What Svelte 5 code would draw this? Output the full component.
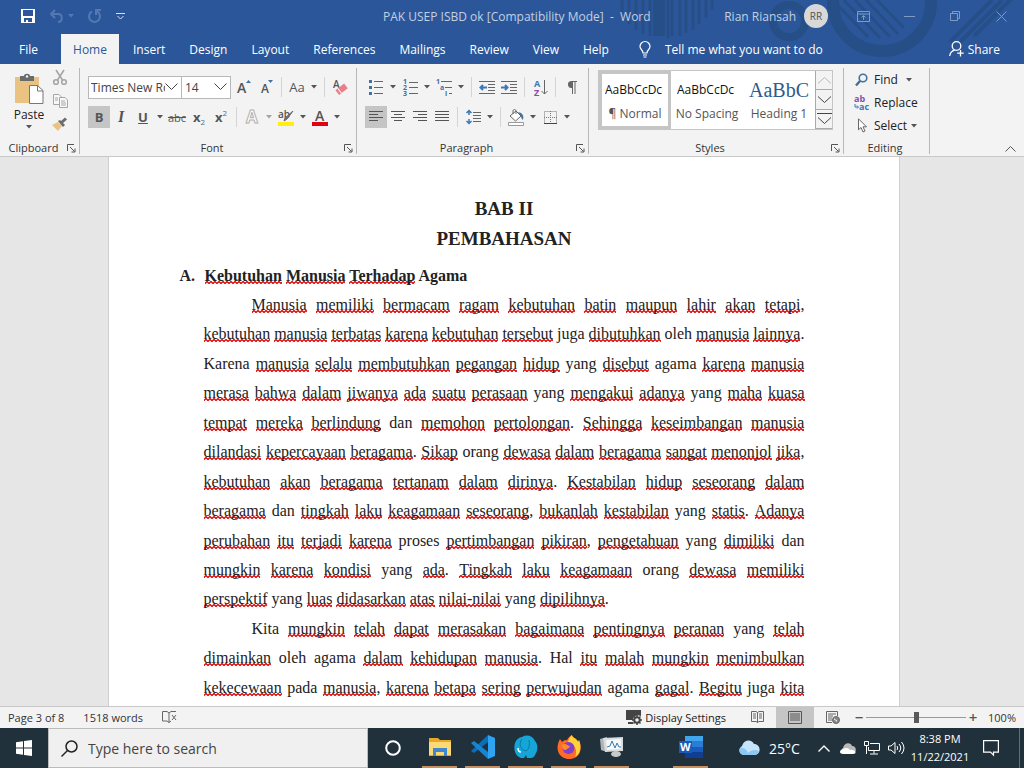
<script>
  const tabs = ['Insert', 'Design', 'Layout', 'References', 'Mailings', 'Review', 'View', 'Help'];

  // Words the Indonesian text shares with the proofing dictionary, so they are left unmarked.
  const known = new Set(['yang', 'agama', 'juga', 'oleh', 'dan', 'Karena', 'proses', 'pada', 'orang', 'Kita', 'Hal']);

  // Each paragraph is a list of set lines; `open` means that it runs on past the last line.
  const paragraphs = [
    {
      open: false,
      lines: [
        'Manusia memiliki bermacam ragam kebutuhan batin maupun lahir akan tetapi,',
        'kebutuhan manusia terbatas karena kebutuhan tersebut juga dibutuhkan oleh manusia lainnya.',
        'Karena manusia selalu membutuhkan pegangan hidup yang disebut agama karena manusia',
        'merasa bahwa dalam jiwanya ada suatu perasaan yang mengakui adanya yang maha kuasa',
        'tempat mereka berlindung dan memohon pertolongan. Sehingga keseimbangan manusia',
        'dilandasi kepercayaan beragama. Sikap orang dewasa dalam beragama sangat menonjol jika,',
        'kebutuhan akan beragama tertanam dalam dirinya. Kestabilan hidup seseorang dalam',
        'beragama dan tingkah laku keagamaan seseorang, bukanlah kestabilan yang statis. Adanya',
        'perubahan itu terjadi karena proses pertimbangan pikiran, pengetahuan yang dimiliki dan',
        'mungkin karena kondisi yang ada. Tingkah laku keagamaan orang dewasa memiliki',
        'perspektif yang luas didasarkan atas nilai-nilai yang dipilihnya.'
      ]
    },
    {
      open: true,
      lines: [
        'Kita mungkin telah dapat merasakan bagaimana pentingnya peranan yang telah',
        'dimainkan oleh agama dalam kehidupan manusia. Hal itu malah mungkin menimbulkan',
        'kekecewaan pada manusia, karena betapa sering perwujudan agama gagal. Begitu juga kita'
      ]
    }
  ].map((p) => ({
    open: p.open,
    lines: p.lines.map((line) =>
      line.split(' ').map((raw) => {
        const [, word, mark] = raw.match(/^(.*?)([.,]?)$/);
        return { word, mark, wrong: !known.has(word) };
      })
    )
  }));

  let fontName = $state('Times New Roman');
  let fontSize = $state('14');
  let zoom = $state(50);
  let query = $state('');
</script>

{#snippet arrow(label)}
  <button class="arrow" aria-label={label}><svg width="6" height="4" viewBox="0 0 6 4"><path d="M0 0h6L3 3.5z" fill="currentColor" /></svg></button>
{/snippet}

{#snippet launcher(label)}
  <button class="launcher" aria-label={label}>
    <svg width="9" height="9" viewBox="0 0 9 9" fill="none" stroke="#555"><path d="M.5 7V.5H7M3 3l4.500 4.500M8 4.500V8H4.500" /></svg>
  </button>
{/snippet}

{#snippet lines(rows)}
  <svg width="14" height="12" viewBox="0 0 14 12" stroke="#555"><path d={rows} /></svg>
{/snippet}

<div class="app">
  <header class="top">
    <svg class="deco" width="424" height="64" viewBox="0 0 424 64" fill="none" stroke="#264f88" aria-hidden="true">
      <path d="M22 0v14M29 0v24M36 0v30M43 0v34M50 0v36M68 0v38M72 0v36M80 0v36M86 0v33M93 0v30M99 0v24M106 0v18M112 0v10" stroke-width="3" />
      <path d="M59 0v36" stroke-width="12" />
      <circle cx="189" cy="21" r="16" stroke-width="8" />
      <circle cx="282" cy="2" r="49" stroke-width="12" />
      <path d="M233 0l35 37M244 0l36 38M255 0l35 37M266 0l32 34M277 0l27 28" stroke-width="3" />
      <path d="M350 42l42-42M360 42l42-42M374 36l38-38" stroke-width="4" />
    </svg>
    <div class="titlebar">
      <div class="quick">
        <button aria-label="Save"><svg width="14" height="14" viewBox="0 0 14 14"><path d="M0 0h14v14H0zM2 1v6h10V1zM3 9v4h2v-2h2v2h4V9z" fill="#fff" fill-rule="evenodd" /></svg></button>
        <button class="dim undo" aria-label="Undo">
          <svg width="15" height="14" viewBox="0 0 15 14" fill="none" stroke="currentColor" stroke-width="2"><path d="M6 1L2 5l4 4M2 5h7c5 0 5 8 0 8" /></svg>
          <svg width="6" height="4" viewBox="0 0 6 4"><path d="M0 0h6L3 3.500z" fill="currentColor" /></svg>
        </button>
        <button class="dim" aria-label="Redo"><svg width="14" height="14" viewBox="0 0 14 14" fill="none" stroke="currentColor" stroke-width="2"><path d="M4 2.500a5.500 5.500 0 1 0 5 0M8 6V1h5" /></svg></button>
        <button class="customize" aria-label="Customize toolbar"><svg width="9" height="7" viewBox="0 0 9 7" fill="none" stroke="#d5deeb"><path d="M0 .5h9M1.500 3l3 3 3-3" /></svg></button>
      </div>
      <div class="doc-title">PAK USEP ISBD ok [Compatibility Mode]&nbsp; -&nbsp; Word</div>
      <div class="account">
        <span>Rian Riansah</span>
        <span class="avatar">RR</span>
      </div>
      <div class="win">
        <button aria-label="Ribbon display options"><svg width="13" height="11" viewBox="0 0 13 11" fill="none" stroke="currentColor"><path d="M.5.5h12v10H.5zM.5 3h12M6.500 9V5M4.500 6.500l2-2 2 2" /></svg></button>
        <button aria-label="Minimize"><svg width="11" height="11" viewBox="0 0 11 11" stroke="currentColor"><path d="M0 5.500h11" /></svg></button>
        <button aria-label="Restore"><svg width="10" height="10" viewBox="0 0 10 10" fill="none" stroke="currentColor"><path d="M.5 2.500h7v7h-7zM2.500 2.500v-2h7v7h-2" /></svg></button>
        <button aria-label="Close"><svg width="11" height="11" viewBox="0 0 11 11" stroke="currentColor"><path d="M.5.5l10 10M10.500.5l-10 10" /></svg></button>
      </div>
    </div>
    <nav class="tabs">
      <button class="file">File</button>
      <button class="active">Home</button>
      {#each tabs as tab}<button>{tab}</button>{/each}
      <button class="tell">
        <svg width="12" height="17" viewBox="0 0 12 17" fill="none" stroke="#fff" stroke-width="1.200"><path d="M4 12c0-3-3-3.500-3-6.500a5 5 0 0 1 10 0C11 8.500 8 9 8 12zM4 14h4M4.500 16h3" /></svg>
        Tell me what you want to do
      </button>
      <button class="share">
        <svg width="15" height="16" viewBox="0 0 15 16" fill="none" stroke="#fff" stroke-width="1.300"><circle cx="7.500" cy="5" r="4.300" /><path d="M.7 15c.5-3.500 2-5 5-5.800M11.500 9v6.500M8.200 12.200h6.500" /></svg>
        Share
      </button>
    </nav>
  </header>

  <section class="ribbon" aria-label="Ribbon">
    <div class="group">
      <div class="clip">
        <button class="paste">
          <svg width="29" height="30" viewBox="0 0 29 30"><path d="M0 3h24v26H0z" fill="#eac282" /><path d="M5 2h4c0-3 6-3 6 0h4v5H5z" fill="#6b6b6b" /><circle cx="12" cy="2.500" r="1.200" fill="#f3f3f3" /><path d="M14.500 11.500h8l5.500 5v13H14.500z" fill="#fff" stroke="#777" /><path d="M22.500 11.500v5.500H28" fill="none" stroke="#777" /></svg>
          <span>Paste</span>
          <svg width="6" height="4" viewBox="0 0 6 4"><path d="M0 0h6L3 3.500z" fill="#555" /></svg>
        </button>
        <div class="clip-side">
          <button aria-label="Cut"><svg width="14" height="15" viewBox="0 0 14 15" fill="none" stroke="#a6a6a6" stroke-width="1.600"><path d="M3 0l6.500 10M11 0L4.500 10" /><circle cx="3" cy="12" r="2.300" /><circle cx="11" cy="12" r="2.300" /></svg></button>
          <button aria-label="Copy"><svg width="15" height="14" viewBox="0 0 15 14" fill="#f8f8f8" stroke="#a6a6a6"><path d="M.5.5H6L8.500 3v7.500h-8z" /><path d="M6.500 3.500H12L14.500 6v7.500h-8zM8 7h4M8 9h5M8 11h5M2 4h3M2 6h3" /></svg></button>
          <button aria-label="Format Painter"><svg width="16" height="14" viewBox="0 0 16 14"><path d="M0 8l6-3 4 4-4 5z" fill="#eac282" /><path d="M6 4l2-1 5 5-2 2z" fill="#6b6b6b" /><path d="M9.500 5.500L14 1.500" stroke="#6b6b6b" stroke-width="3" /></svg></button>
        </div>
      </div>
      <footer><span>Clipboard</span>{@render launcher('Clipboard options')}</footer>
    </div>

    <div class="group">
      <div class="rows">
        <div class="row">
          <select class="font-name" aria-label="Font" bind:value={fontName}><option>Times New Roman</option></select>
          <select class="font-size" aria-label="Font size" bind:value={fontSize}><option>14</option></select>
          <button class="tool" aria-label="Increase font size"><svg width="16" height="16" viewBox="0 0 16 16"><text x="1" y="14" class="glyph" font-size="14">A</text><path d="M10 4l2.500-3L15 4z" fill="#41719c" /></svg></button>
          <button class="tool" aria-label="Decrease font size"><svg width="16" height="16" viewBox="0 0 16 16"><text x="3" y="14" class="glyph" font-size="12">A</text><path d="M10 1h5l-2.500 3z" fill="#41719c" /></svg></button>
          <i class="sep"></i>
          <button class="tool case">Aa</button>{@render arrow('Change case')}
          <i class="sep"></i>
          <button class="tool" aria-label="Clear formatting"><svg width="16" height="16" viewBox="0 0 16 16"><text x="1" y="9" class="glyph" font-size="10">A</text><g transform="rotate(-38 10 10)"><path d="M4 7h11v6H4z" fill="#e8808c" /><path d="M7 7v6" stroke="#fff" /></g></svg></button>
        </div>
        <div class="row">
          <button class="tool on"><b>B</b></button>
          <button class="tool ital"><b>I</b></button>
          <button class="tool under"><b>U</b></button>{@render arrow('Underline style')}
          <button class="tool strike">abc</button>
          <button class="tool"><b>x</b><sub>2</sub></button>
          <button class="tool"><b>x</b><sup>2</sup></button>
          <i class="sep"></i>
          <button class="tool" aria-label="Text effects"><svg width="16" height="16" viewBox="0 0 16 16"><text x="2" y="14" font-size="17" font-weight="700" fill="#fff" stroke="#b0b0b0">A</text></svg></button><span class="faint">{@render arrow('Text effects menu')}</span>
          <button class="tool" aria-label="Highlight colour"><svg width="17" height="17" viewBox="0 0 17 17"><path d="M0 13h16v4H0z" fill="#ffee10" /><text x="0" y="9" class="glyph" font-size="10">ab</text><path d="M15 2l-6 8-3 2 1-3z" fill="#777" stroke="#666" /></svg></button>{@render arrow('Highlight menu')}
          <button class="tool" aria-label="Font colour"><svg width="17" height="17" viewBox="0 0 17 17"><path d="M0 13h16v4H0z" fill="#e3000f" /><text x="3" y="12" class="glyph" font-size="14">A</text></svg></button>{@render arrow('Font colour menu')}
        </div>
      </div>
      <footer><span>Font</span>{@render launcher('Font options')}</footer>
    </div>

    <div class="group">
      <div class="rows">
        <div class="row">
          <button class="tool" aria-label="Bullets"><svg width="15" height="16" viewBox="0 0 15 16"><path d="M5 2.500h9M5 8.500h9M5 14.500h9" stroke="#666" /><path d="M0 1h3v3H0zM0 7h3v3H0zM0 13h3v3H0z" fill="#41719c" /></svg></button>{@render arrow('Bullet styles')}
          <button class="tool" aria-label="Numbering"><svg width="15" height="17" viewBox="0 0 15 17"><path d="M6 3.500h9M6 8.500h9M6 14.500h9" stroke="#666" /><g font-size="7" font-weight="700" fill="#41719c"><text x="0" y="5">1</text><text x="0" y="11">2</text><text x="0" y="17">3</text></g></svg></button>{@render arrow('Number styles')}
          <button class="tool" aria-label="Multilevel list"><svg width="17" height="17" viewBox="0 0 17 17"><path d="M5 2.500h11M9 8.500h7M13 14.500h3" stroke="#666" /><g font-size="7" font-weight="700" fill="#41719c"><text x="0" y="5">1</text><text x="4" y="11">a</text><text x="9" y="17">i</text></g></svg></button>{@render arrow('List styles')}
          <i class="sep"></i>
          <button class="tool" aria-label="Decrease indent"><svg width="16" height="13" viewBox="0 0 16 13"><path d="M0 .5h16M9 3.500h7M9 6.500h7M9 9.500h7M0 12.500h16" stroke="#666" /><path d="M8 6.500H2M4 4L1.500 6.500 4 9" fill="none" stroke="#3b78b5" stroke-width="2" /></svg></button>
          <button class="tool" aria-label="Increase indent"><svg width="16" height="13" viewBox="0 0 16 13"><path d="M0 .5h16M9 3.500h7M9 6.500h7M9 9.500h7M0 12.500h16" stroke="#666" /><path d="M0 6.500h6M4 4l2.500 2.500L4 9" fill="none" stroke="#3b78b5" stroke-width="2" /></svg></button>
          <i class="sep"></i>
          <button class="tool" aria-label="Sort"><svg width="15" height="17" viewBox="0 0 15 17"><g font-size="9" font-weight="700"><text x="1" y="8" fill="#3b78b5">A</text><text x="1" y="17" fill="#8650a8">Z</text></g><path d="M11.500 1v14M8.500 12l3 3 3-3" fill="none" stroke="#666" /></svg></button>
          <i class="sep"></i>
          <button class="tool" aria-label="Show marks"><svg width="11" height="13" viewBox="0 0 11 13"><path d="M5 0h6v1H9.500v12h-1V1H7v12H6V7a3.500 3.500 0 1 1-1-7z" fill="#666" /></svg></button>
        </div>
        <div class="row">
          <button class="tool on" aria-label="Align left">{@render lines('M0 .5h14M0 3.500h9M0 6.500h14M0 9.500h9')}</button>
          <button class="tool" aria-label="Center">{@render lines('M0 .5h14M3 3.500h8M0 6.500h14M3 9.500h8')}</button>
          <button class="tool" aria-label="Align right">{@render lines('M0 .5h14M5 3.500h9M0 6.500h14M5 9.500h9')}</button>
          <button class="tool" aria-label="Justify">{@render lines('M0 .5h14M0 3.500h14M0 6.500h14M0 9.500h14')}</button>
          <i class="sep"></i>
          <button class="tool" aria-label="Line spacing"><svg width="15" height="16" viewBox="0 0 15 16" fill="none"><path d="M7 3.500h8M7 6.500h8M7 9.500h8M7 12.500h8" stroke="#666" /><path d="M3 1v5M3 10v5M.5 4L3 1.500 5.500 4M.5 12L3 14.500 5.500 12" stroke="#3b78b5" stroke-width="1.500" /></svg></button>{@render arrow('Spacing menu')}
          <i class="sep"></i>
          <button class="tool" aria-label="Shading"><svg width="17" height="17" viewBox="0 0 17 17"><path d="M.5 13.500h15v3H.5z" fill="#fff" stroke="#999" /><path d="M2 7l6-5 5 5-5.500 5z" fill="#fff" stroke="#666" /><path d="M5 5V2c0-2 3-2 3 0v3" fill="none" stroke="#666" /><path d="M10 3c5 1 6 4 5 8-1-1-2-2-2-4z" fill="#41719c" /></svg></button>{@render arrow('Shading menu')}
          <button class="tool" aria-label="Borders"><svg width="13" height="13" viewBox="0 0 13 13" fill="none" stroke="#777"><path d="M.5.5h12v12H.5zM6.500 0v13M0 6.500h13" stroke-dasharray="1 1" /><path d="M0 12.500h13" stroke="#444" /></svg></button>{@render arrow('Borders menu')}
        </div>
      </div>
      <footer><span>Paragraph</span>{@render launcher('Paragraph options')}</footer>
    </div>

    <div class="group">
      <div class="gallery">
        <button class="style picked"><span class="sample">AaBbCcDc</span><span class="name">¶ Normal</span></button>
        <button class="style"><span class="sample">AaBbCcDc</span><span class="name">No Spacing</span></button>
        <button class="style"><span class="sample big">AaBbC</span><span class="name">Heading 1</span></button>
        <div class="scroll">
          <button class="off" aria-label="Previous styles"><svg width="13" height="7" viewBox="0 0 13 7"><path d="M0 6.500l6.500-6 6.500 6" /></svg></button>
          <button aria-label="Next styles"><svg width="13" height="7" viewBox="0 0 13 7"><path d="M0 .5l6.500 6 6.500-6" /></svg></button>
          <button aria-label="More styles"><svg width="15" height="12" viewBox="0 0 15 12"><path d="M0 .5h15M1 4.500l6.500 6 6.500-6" /></svg></button>
        </div>
      </div>
      <footer><span>Styles</span>{@render launcher('Styles options')}</footer>
    </div>

    <div class="group">
      <div class="editing">
        <button><svg width="16" height="14" viewBox="0 0 16 14" fill="none" stroke="#41719c"><circle cx="9" cy="5" r="3.800" stroke-width="1.600" /><path d="M6 8l-4 4.500" stroke-width="2.500" /></svg><span>Find</span><svg class="more" width="6" height="4" viewBox="0 0 6 4"><path d="M0 0h6L3 3.500z" fill="#555" /></svg></button>
        <button><svg width="16" height="16" viewBox="0 0 16 16"><text x="0" y="7" font-size="9" font-weight="700" fill="#8650a8">ab</text><text x="5" y="15" font-size="9" font-weight="700" fill="#3b78b5">ac</text><path d="M1 9v3h3M3 10.500L4.500 12 3 13.500" fill="none" stroke="#3b78b5" /></svg><span>Replace</span></button>
        <button><svg width="16" height="15" viewBox="0 0 16 15" fill="#fff" stroke="#666"><path d="M4.500.8v11L7 9.500 9 14l2-1-2-4.200h3.500z" /></svg><span>Select</span><svg width="6" height="4" viewBox="0 0 6 4"><path d="M0 0h6L3 3.500z" fill="#555" /></svg></button>
      </div>
      <footer><span>Editing</span></footer>
    </div>

    <button class="collapse" aria-label="Collapse the ribbon"><svg width="11" height="6" viewBox="0 0 11 6" fill="none" stroke="#555"><path d="M.5 5.500l5-5 5 5" /></svg></button>
  </section>

  <main class="canvas">
    <article class="page">
      <h1>BAB II</h1>
      <h1>PEMBAHASAN</h1>
      <h2><span class="num">A.</span><span><u>Kebutuhan</u> <u>Manusia</u> <u>Terhadap</u> Agama</span></h2>
      {#each paragraphs as p}
        <p class:open={p.open}>
          {#each p.lines as words}
            <span class="line">
              {#each words as w}<span>{#if w.wrong}<u>{w.word}</u>{:else}{w.word}{/if}{w.mark}</span>{/each}
            </span>
          {/each}
        </p>
      {/each}
    </article>
  </main>

  <footer class="status">
    <span>Page 3 of 8</span>
    <span>1518 words</span>
    <button aria-label="Proofing errors"><svg width="15" height="12" viewBox="0 0 15 12" fill="none" stroke="#666"><path d="M7 2v9.500M.5.500H5l2 1.500L9 .5h5M.5.500V10H5l2 1.500 2-1.500M10 4l4 5M14 4l-4 5" /></svg></button>
    <button class="display">
      <svg width="16" height="15" viewBox="0 0 16 15"><path d="M0 0h15v6l-4-1-4 3v2H0zM2 12h5v2H2z" fill="#444" /><circle cx="11" cy="10" r="2.800" fill="none" stroke="#444" stroke-width="2" /><path d="M11 5v2M11 13v2M6 10h2M14 10h2M7.500 6.500L9 8M13 12l1.500 1.500M14.500 6.500L13 8M9 12l-1.500 1.500" stroke="#444" stroke-width="1.500" /></svg>
      Display Settings
    </button>
    <div class="views">
      <button aria-label="Read mode"><svg width="13" height="12" viewBox="0 0 13 12" fill="none" stroke="#666"><path d="M6.500 1.500v10M.5.500H5l1.500 1L8 .5h4.500v10H8l-1.500 1-1.500-1H.5zM2 3h3M2 5h3M2 7h3M8 3h3M8 5h3M8 7h3" /></svg></button>
      <button class="on" aria-label="Print layout"><svg width="14" height="13" viewBox="0 0 14 13" fill="none" stroke="#555"><path d="M.5.5h13v12H.5zM2 3h10M2 5h10M2 7h10M2 9h10" /></svg></button>
      <button aria-label="Web layout"><svg width="14" height="13" viewBox="0 0 14 13" fill="none" stroke="#666"><path d="M6 11.500H.5V.5h11V5M2 3h8M2 5h5M2 7h4M2 9h4" /><circle cx="10" cy="9" r="3.500" fill="#888" /><path d="M8 8c2 0 1 2 3 2" stroke="#fff" /></svg></button>
    </div>
    <div class="zoom">
      <button aria-label="Zoom out">−</button>
      <input type="range" min="0" max="100" aria-label="Zoom" bind:value={zoom} />
      <button aria-label="Zoom in">+</button>
    </div>
    <span class="percent">100%</span>
  </footer>

  <div class="taskbar">
    <button class="start" aria-label="Start"><svg width="16" height="16" viewBox="0 0 16 16" fill="#fff"><path d="M0 2.300L7 1.200v6.300H0zM8 1l8-1v7.500H8zM0 8.500h7v6.300l-7-1zM8 8.500h8V16l-8-1z" /></svg></button>
    <label class="search">
      <svg width="17" height="17" viewBox="0 0 17 17" fill="none" stroke="#222" stroke-width="1.500"><circle cx="10.500" cy="6.500" r="5.500" /><path d="M6.500 10.500L.5 16.500" /></svg>
      <input type="text" placeholder="Type here to search" aria-label="Search" bind:value={query} />
    </label>
    <button class="cortana" aria-label="Cortana"><svg width="16" height="16" viewBox="0 0 16 16" fill="none" stroke="#fff" stroke-width="2"><circle cx="8" cy="8" r="6.800" /></svg></button>
    <button class="appbtn" aria-label="File Explorer"><svg width="24" height="22" viewBox="0 0 24 22"><path d="M1 2h9l2 2h11v16H1z" fill="#e9a825" /><path d="M1 6h22v13H1z" fill="#fcd975" /><path d="M5 20v-8h14v8h-3v-4H8v4z" fill="#3f87cf" /></svg></button>
    <button class="appbtn" aria-label="Visual Studio Code"><svg width="24" height="24" viewBox="0 0 24 24"><path d="M17 0v7L3 18l-3-2 17-16z" fill="#0a6fb8" /><path d="M17 24v-7L3 6 0 8z" fill="#1387d6" /><path d="M17 0l7 3v18l-7 3z" fill="#2ea3f2" /></svg></button>
    <button class="appbtn" aria-label="Elephant"><svg width="24" height="24" viewBox="0 0 24 24"><path d="M1 17C-1 9 2 3 8 2c5-3 11-1 13 4 3 3 3 9 1 12-1 2-2 5-5 5h-4l-1-3-2 3H7c-3-1-5-3-6-6z" fill="#15a5d8" /><path d="M8 4c-4 5-1 11 4 12 3-2 4-6 3-11" fill="none" stroke="#0879a8" /><path d="M4 13c0 3 1 4 3 4" fill="none" stroke="#fff" stroke-width="1.500" /></svg></button>
    <button class="appbtn" aria-label="Firefox"><svg width="24" height="24" viewBox="0 0 24 24"><path d="M3 4l2 3c2-2 4-2 5-2 2-3 3-4 5-5 0 3 5 3 6 7l1-2c4 9 1 19-10 19C3 24-3 15 3 4z" fill="#ff6a26" /><path d="M15 0c0 3 5 3 6 7l1-2c3 8 1 14-4 17 3-7 0-12-7-15 1-4 2-5 4-7z" fill="#ffd23a" /><circle cx="11.500" cy="13" r="6" fill="#8140c8" /><path d="M5 10c4-3 5 1 8 1-1 3-3 2-4 4-3 0-4-2-4-5z" fill="#ff8a2a" /></svg></button>
    <button class="appbtn" aria-label="Resource Monitor"><svg width="24" height="22" viewBox="0 0 24 22"><path d="M0 3l7-2v15l-6-2z" fill="#aeb3b5" /><path d="M3 2l20-1v14L5 16z" fill="#d9dcdd" /><path d="M6 4l15-1v10L7 14z" fill="#f4f8fa" /><path d="M7 11l3-1 2-5 3 7 2-5 2 4h2" fill="none" stroke="#3b78a8" /><ellipse cx="16" cy="18" rx="5" ry="3" fill="#c7cacb" /></svg></button>
    <button class="appbtn word" aria-label="Word"><svg width="24" height="22" viewBox="0 0 24 22"><path d="M6 0h18v6H6z" fill="#41a5ee" /><path d="M6 5h18v6H6z" fill="#2b7cd3" /><path d="M6 11h18v5H6z" fill="#185abd" /><path d="M6 16h18v6H6z" fill="#103f91" /><path d="M0 5h13v12H0z" fill="#185abd" /><text x="1" y="15" font-size="11" font-weight="700" fill="#fff">W</text></svg></button>
    <button class="weather">
      <svg width="22" height="16" viewBox="0 0 22 16"><path d="M5 15a5 5 0 0 1-1-9C6-1 14-1 16 4c7 0 8 11 0 11z" fill="#c6e5fa" /><path d="M5 15c-3-1-5-4-3-7 4-1 7 2 8 5 3-3 7-4 11-2-1 3-3 4-5 4z" fill="#8cc8f2" /></svg>
      25°C
    </button>
    <div class="tray">
      <button aria-label="Hidden icons"><svg width="12" height="7" viewBox="0 0 12 7" fill="none" stroke="#fff" stroke-width="1.400"><path d="M.5 6.500L6 1l5.500 5.500" /></svg></button>
      <button aria-label="OneDrive"><svg width="16" height="11" viewBox="0 0 16 11"><path d="M3 10a3 3 0 0 1 0-5c1-6 8-6 9-2 5 0 5 7 1 7z" fill="#b8b8b8" /><path d="M3 11c-4 0-4-4 0-5 3-2 6-1 7 1 5-1 8 4 3 4z" fill="#fff" /></svg></button>
      <button aria-label="Network"><svg width="16" height="14" viewBox="0 0 16 14" fill="none" stroke="#fff"><path d="M6 2.500h9.500v7H4.500V6M10 9.500v3M6 13h8M.5.500h4v4h-4zM2.500 4.500V13" /></svg></button>
      <button aria-label="Volume"><svg width="17" height="14" viewBox="0 0 17 14" fill="none" stroke="#fff"><path d="M.5 5h2.500l4-3.500v11L3 9H.5zM9 5q1.500 2 0 4M11 3q3.500 4 0 8M13.500 1q5 6 0 12" /></svg></button>
    </div>
    <div class="clock"><time>8:38 PM</time><time>11/22/2021</time></div>
    <button class="notes" aria-label="Notifications"><svg width="16" height="16" viewBox="0 0 16 16" fill="none" stroke="#fff" stroke-width="1.200"><path d="M.6.6h14.800v11.500H10.500v3l-3-3H.6z" /></svg></button>
  </div>
</div>

<style>
  :global(body) { background: #e6e6e6; }
  .app { display: flex; flex-direction: column; height: 100vh; overflow: hidden; font-family: 'Open Sans', sans-serif; font-size: 12px; color: #333; }
  button { display: flex; align-items: center; justify-content: center; padding: 0; border: 0; background: none; font: inherit; color: inherit; white-space: nowrap; }
  svg { display: block; flex: none; overflow: visible; }

  .top { position: relative; flex: none; background: #2b579a; color: #fff; }
  .deco { position: absolute; top: 0; right: 0; overflow: hidden; }
  .titlebar, .tabs { position: relative; display: flex; }
  .titlebar { align-items: center; height: 32px; color: #c3cfe2; }
  .quick { display: flex; align-items: center; width: 362px; padding-left: 21px; gap: 14px; }
  .undo { gap: 4px; }
  .dim { color: #5479b2; }
  .undo, .customize { flex: none; }
  .doc-title { flex: 1; white-space: nowrap; }
  .account { display: flex; align-items: center; gap: 8px; }
  .avatar { display: grid; place-items: center; width: 24px; height: 24px; border-radius: 50%; background: #d8d8d8; color: #555; font-size: 10px; }
  .win { display: flex; width: 196px; padding-left: 12px; box-sizing: border-box; color: #7f9bc5; }
  .win button { flex: 1; height: 32px; }
  .tabs { height: 32px; align-items: flex-end; }
  .tabs button { height: 30px; padding: 0 12px; }
  .tabs .file { width: 61px; padding: 0 4px 0 0; }
  .tabs .active { width: 58px; margin-right: 2px; padding: 0; background: #f3f3f3; color: #2b579a; }
  .tabs .tell { gap: 14px; margin-left: 6px; }
  .tabs .share { gap: 4px; margin-left: auto; padding: 0 24px 0 0; }

  .ribbon { display: flex; flex: none; height: 92px; background: #f3f3f3; border-bottom: 1px solid #c8c8c8; }
  .group { display: flex; flex-direction: column; box-sizing: border-box; margin: 4px 0 2px; padding-left: 8px; border-right: 1px solid #b8b8b8; color: #333; }
  .group:nth-child(1) { width: 80px; padding-left: 0; }
  .group:nth-child(2) { width: 277px; }
  .group:nth-child(3) { width: 232px; }
  .group:nth-child(4) { width: 255px; }
  .group:nth-child(5) { width: 86px; }
  .group footer { display: flex; align-items: center; height: 12px; margin: auto 0 0 -8px; padding-right: 3px; font-size: 11px; line-height: 12px; color: #333; }
  .group:nth-child(1) footer { margin-left: 0; }
  .group footer span { flex: 1; text-align: center; }
  .launcher { width: 9px; height: 9px; }
  .clip { display: flex; padding-left: 14px; gap: 8px; }
  .paste { flex-direction: column; width: 30px; padding-top: 4px; gap: 2px; color: #222; }
  .clip-side { display: flex; flex-direction: column; gap: 9px; padding-top: 2px; }
  .rows { display: flex; flex-direction: column; gap: 8px; padding-top: 8px; }
  .row { display: flex; align-items: center; height: 22px; }
  select { appearance: none; box-sizing: border-box; height: 23px; padding: 0 20px 0 3px; border: 1px solid #b8b8b8; border-radius: 0; background: #fff url("data:image/svg+xml,%3Csvg xmlns='http://www.w3.org/2000/svg' width='13' height='8' fill='none' stroke='%23444'%3E%3Cpath d='M.5.5l6 6 6-6'/%3E%3C/svg%3E") no-repeat right 3px center; font: inherit; color: #444; }
  .font-name { width: 94px; padding: 0 16px 0 2px; }
  .font-size { width: 50px; margin: 0 2px 0 -1px; }
  .tool { flex: none; width: 22px; height: 22px; font-size: 13px; color: #555; }
  .on { background: #c5c5c5; }
  .arrow { flex: none; width: 12px; height: 22px; color: #555; }
  .faint { opacity: 0.5; }
  .sep { width: 1px; height: 20px; margin: 0 4px; background: #d4d4d4; }
  :global(.glyph) { font-weight: 600; fill: #555; }
  .ital { font-family: 'Liberation Serif', serif; font-style: italic; font-size: 16px; }
  .under { text-decoration: underline; }
  .strike { font-size: 11px; text-decoration: line-through; }
  sub, sup { font-size: 8px; line-height: 8px; color: #41719c; }
  sub { align-self: flex-end; padding-bottom: 2px; }
  sup { align-self: flex-start; padding-top: 3px; }
  .gallery { display: flex; width: 235px; height: 60px; margin: 2px 0 0 1px; box-sizing: border-box; border: 1px solid #c5c5c5; background: #fff; }
  .style { flex: 1; flex-direction: column; min-width: 0; overflow: hidden; border: 3px solid #fff; color: #222; }
  .picked { border-color: #c5c5c5; }
  .sample { display: block; width: 60px; height: 28px; overflow: hidden; line-height: 28px; text-align: left; color: #111; }
  .big { font-family: 'Liberation Serif', serif; font-size: 20px; color: #2e5b8e; }
  .name { height: 20px; line-height: 20px; color: #555; }
  .scroll { display: flex; flex-direction: column; width: 17px; }
  .scroll button { flex: 1; border: 1px solid #aaa; border-width: 0 0 1px 1px; background: #f3f3f3; }
  .scroll svg { fill: none; stroke: #444; }
  .scroll .off svg { stroke: #b8b8b8; }
  .editing { display: flex; flex-direction: column; align-items: flex-start; padding-left: 2px; color: #222; }
  .editing button { height: 23px; gap: 4px; }
  .editing .more { margin-left: 4px; }
  .collapse { align-self: flex-end; margin: 0 8px 4px auto; }

  .canvas { flex: 1; min-height: 0; overflow: hidden; padding-right: 17px; background: #e6e6e6; }
  .page { box-sizing: border-box; max-width: 792px; height: 100%; margin: 0 auto; padding: 37px 94px 0 95px; border: solid #cfcfcf; border-width: 0 1px; background: #fff; font: 16px/1.84 'Liberation Serif', serif; color: #222; }
  h1 { margin: 0; font-size: 19px; line-height: 30px; text-align: center; }
  h2 { display: flex; margin: 7px 0 0 -24px; font-size: 16px; line-height: 29px; }
  .num { width: 25px; }
  p { margin: 0; }
  .line { display: flex; justify-content: space-between; white-space: nowrap; }
  .line:first-child { padding-left: 48px; }
  p:not(.open) .line:last-child { justify-content: flex-start; gap: 4px; }
  u { background: url("data:image/svg+xml,%3Csvg xmlns='http://www.w3.org/2000/svg' width='4' height='3' fill='none' stroke='%23e00000' stroke-width='1.3'%3E%3Cpath d='M-1 3.500L2 .5l3 3'/%3E%3C/svg%3E") repeat-x left bottom; text-decoration: none; }

  .status { display: flex; flex: none; align-items: center; height: 22px; box-sizing: border-box; padding: 0 0 1px 8px; border-top: 1px solid #c8c8c8; background: #f3f3f3; font-size: 11px; color: #333; }
  .status > span + span { margin: 0 19px; }
  .display { gap: 3px; margin-left: auto; color: #222; }
  .views { display: flex; margin-left: 12px; }
  .views button { width: 38px; height: 21px; }
  .zoom { display: flex; align-items: center; }
  .zoom button { width: 14px; font-size: 15px; font-weight: 600; line-height: 20px; color: #555; }
  .zoom input { appearance: none; width: 100px; height: 12px; margin: 0; background: linear-gradient(#999, #999) center / 100% 1px no-repeat; }
  .zoom input::-webkit-slider-thumb { appearance: none; width: 5px; height: 11px; background: #5a5a5a; }
  .status > .percent { margin: 0 8px; }

  .taskbar { display: flex; flex: none; height: 40px; background: #21313b; color: #fff; }
  .start { width: 48px; }
  .search { display: flex; flex: 0 1 320px; align-items: center; gap: 10px; box-sizing: border-box; padding-left: 12px; border: 1px solid #bbb; background: #f0f0f0; }
  .search input { flex: 1; min-width: 0; border: 0; outline: 0; padding: 0; background: none; font: 14px 'Open Sans', sans-serif; color: #333; }
  .search input::placeholder { color: #444; opacity: 1; }
  .cortana { width: 50px; }
  .appbtn { width: 35px; margin: 0 4px; border-bottom: 2px solid #c98f5f; }
  .word { margin-left: 40px; }
  .weather { gap: 9px; margin: 0 auto 0 26px; font-size: 14px; }
  .tray { display: flex; }
  .tray button { width: 24px; }
  .clock { display: flex; flex-direction: column; justify-content: center; width: 64px; text-align: center; font-size: 11px; line-height: 18px; }
  .notes { width: 38px; margin-right: 4px; padding-right: 9px; border-right: 1px solid #60707a; box-sizing: content-box; }
</style>
